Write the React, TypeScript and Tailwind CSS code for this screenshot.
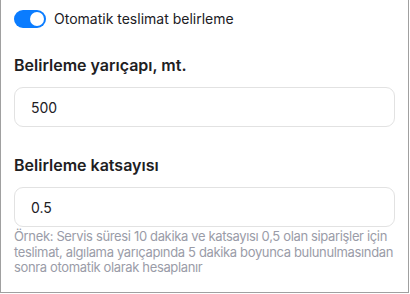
import React, { useState } from 'react';

const Field: React.FC<{ label: string; value: string; className?: string }> = ({ label, value, className }) => (
  <div className={className}>
    <div className="text-[16px] leading-[20px] font-semibold text-[#21201f]">{label}</div>
    <div className="mt-[12px] h-[40px] rounded-[9px] border border-[#e2e2e2] bg-white flex items-center px-[16px] text-[14px] text-[#21201f]">
      {value}
    </div>
  </div>
);

export default function App() {
  const [on, setOn] = useState(true);

  return (
    <div className="w-[409px] h-[293px] bg-white border-l border-r border-b border-[#a0a0a0] font-['Inter','Noto_Sans',sans-serif] px-[13px]">
      <div className="flex items-center gap-[8px] pt-[8px]">
        <button
          onClick={() => setOn(!on)}
          className={`w-[32px] h-[18px] rounded-full flex items-center px-[2px] ${on ? 'bg-[#0a7cff] justify-end' : 'bg-[#c8c8c8] justify-start'}`}
        >
          <span className="w-[14px] h-[14px] rounded-full bg-white" />
        </button>
        <span className="text-[14px] text-[#21201f]">Otomatik teslimat belirleme</span>
      </div>
      <Field className="mt-[26px]" label="Belirleme yarıçapı, mt." value="500" />
      <Field className="mt-[28px]" label="Belirleme katsayısı" value="0.5" />
      <p className="mt-[2px] text-[13px] leading-[15.5px] text-[#9a9ca8] tracking-[-0.35px]">
        Örnek: Servis süresi 10 dakika ve katsayısı 0,5 olan siparişler için teslimat, algılama yarıçapında 5 dakika boyunca bulunulmasından sonra otomatik olarak hesaplanır
      </p>
    </div>
  );
}
